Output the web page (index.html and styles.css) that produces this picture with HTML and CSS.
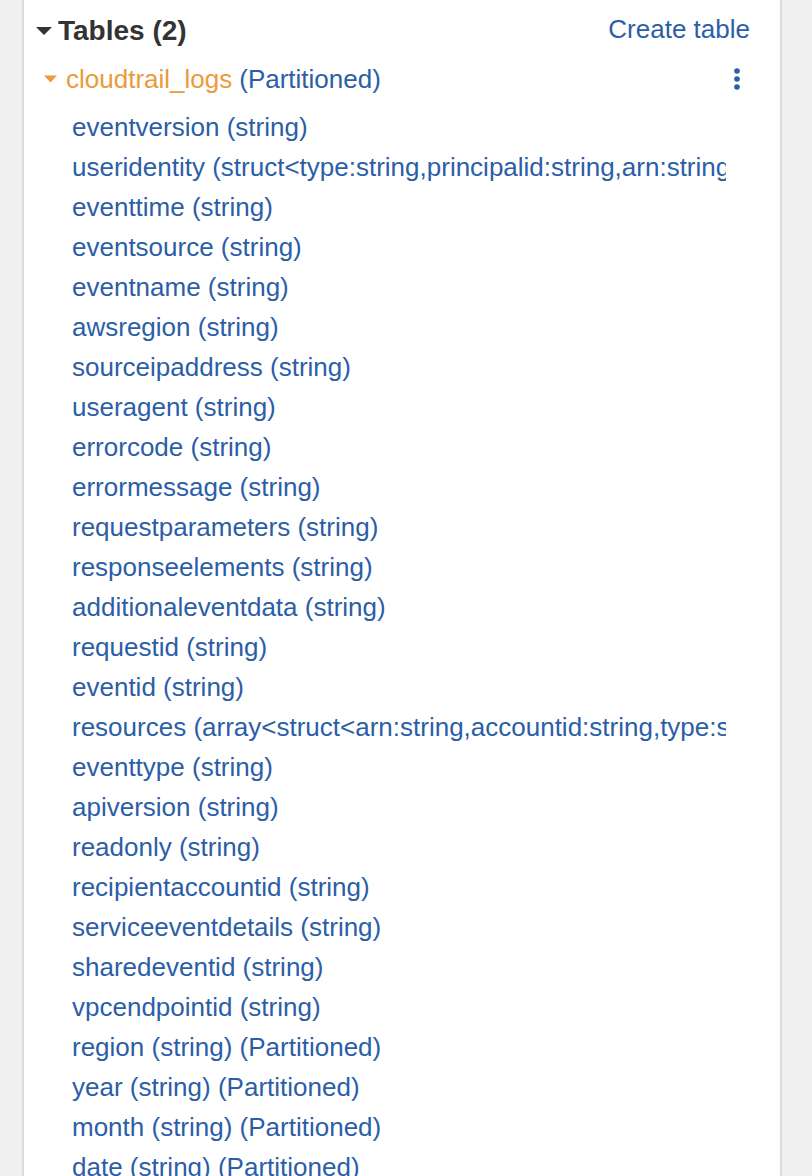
FILE: index.html
```html
<!DOCTYPE html>
<html lang="en">
<head>
<meta charset="utf-8">
<title>Tables</title>
<link rel="stylesheet" href="styles.css">
</head>
<body>
<div class="panel">
  <div class="section-head">
    <div class="section-title">
      <svg class="caret caret-dark" width="16" height="10" viewBox="0 0 16 10"><polygon points="0,1 16,1 8,9" fill="#333"/></svg>
      <span>Tables (2)</span>
    </div>
    <a class="create-link">Create table</a>
  </div>
  <div class="table-row">
    <div class="table-name">
      <svg class="caret caret-orange" width="13" height="8" viewBox="0 0 13 8"><polygon points="0,0.5 13,0.5 6.5,7.5" fill="#ec9a3c"/></svg>
      <span class="name">cloudtrail_logs</span>
      <span class="tag">(Partitioned)</span>
    </div>
    <svg class="kebab" width="8" height="24" viewBox="0 0 8 24"><circle cx="4" cy="4" r="2.8" fill="#2b5ea7"/><circle cx="4" cy="12" r="2.8" fill="#2b5ea7"/><circle cx="4" cy="20" r="2.8" fill="#2b5ea7"/></svg>
  </div>
  <ul class="columns">
    <li>eventversion (string)</li>
    <li>useridentity (struct&lt;type:string,principalid:string,arn:string,accountid:string,invokedby:string,accesskeyid:string,username:string&gt;)</li>
    <li>eventtime (string)</li>
    <li>eventsource (string)</li>
    <li>eventname (string)</li>
    <li>awsregion (string)</li>
    <li>sourceipaddress (string)</li>
    <li>useragent (string)</li>
    <li>errorcode (string)</li>
    <li>errormessage (string)</li>
    <li>requestparameters (string)</li>
    <li>responseelements (string)</li>
    <li>additionaleventdata (string)</li>
    <li>requestid (string)</li>
    <li>eventid (string)</li>
    <li>resources (array&lt;struct&lt;arn:string,accountid:string,type:string&gt;&gt;)</li>
    <li>eventtype (string)</li>
    <li>apiversion (string)</li>
    <li>readonly (string)</li>
    <li>recipientaccountid (string)</li>
    <li>serviceeventdetails (string)</li>
    <li>sharedeventid (string)</li>
    <li>vpcendpointid (string)</li>
    <li>region (string) (Partitioned)</li>
    <li>year (string) (Partitioned)</li>
    <li>month (string) (Partitioned)</li>
    <li>date (string) (Partitioned)</li>
  </ul>
</div>
</body>
</html>
```
FILE: styles.css
```css
html, body {
  margin: 0;
  padding: 0;
  height: 100%;
}
body {
  background: #f0f0f0;
  font-family: "Liberation Sans", Arial, sans-serif;
  overflow: hidden;
}
.panel {
  margin-left: 22px;
  width: 756px;
  height: 1176px;
  background: #fff;
  border-left: 2px solid #dcdcdc;
  border-right: 2px solid #dcdcdc;
  padding-top: 11px;
  box-sizing: content-box;
  overflow: hidden;
}
.section-head {
  height: 40px;
  display: flex;
  align-items: center;
  justify-content: space-between;
  padding-left: 12px;
  padding-right: 30px;
}
.section-title {
  display: flex;
  align-items: center;
  gap: 6px;
  font-weight: bold;
  font-size: 28px;
  color: #333;
}
.create-link {
  font-size: 26px;
  color: #2b5ea7;
  padding-bottom: 4px;
}
.table-row {
  margin-top: 8px;
  height: 40px;
  display: flex;
  align-items: center;
  justify-content: space-between;
  padding-left: 20px;
  padding-right: 39px;
}
.table-name {
  display: flex;
  align-items: center;
  gap: 9px;
  font-size: 26px;
}
.table-name .name {
  color: #ec9a3c;
}
.table-name .tag {
  color: #2b5ea7;
  margin-left: -2px;
}
.columns {
  list-style: none;
  margin: 8px 0 0 48px;
  padding: 0;
  width: 654px;
  overflow: hidden;
}
.columns li {
  height: 40px;
  line-height: 40px;
  font-size: 26px;
  color: #2b5ea7;
  white-space: nowrap;
  overflow: hidden;
}
```
